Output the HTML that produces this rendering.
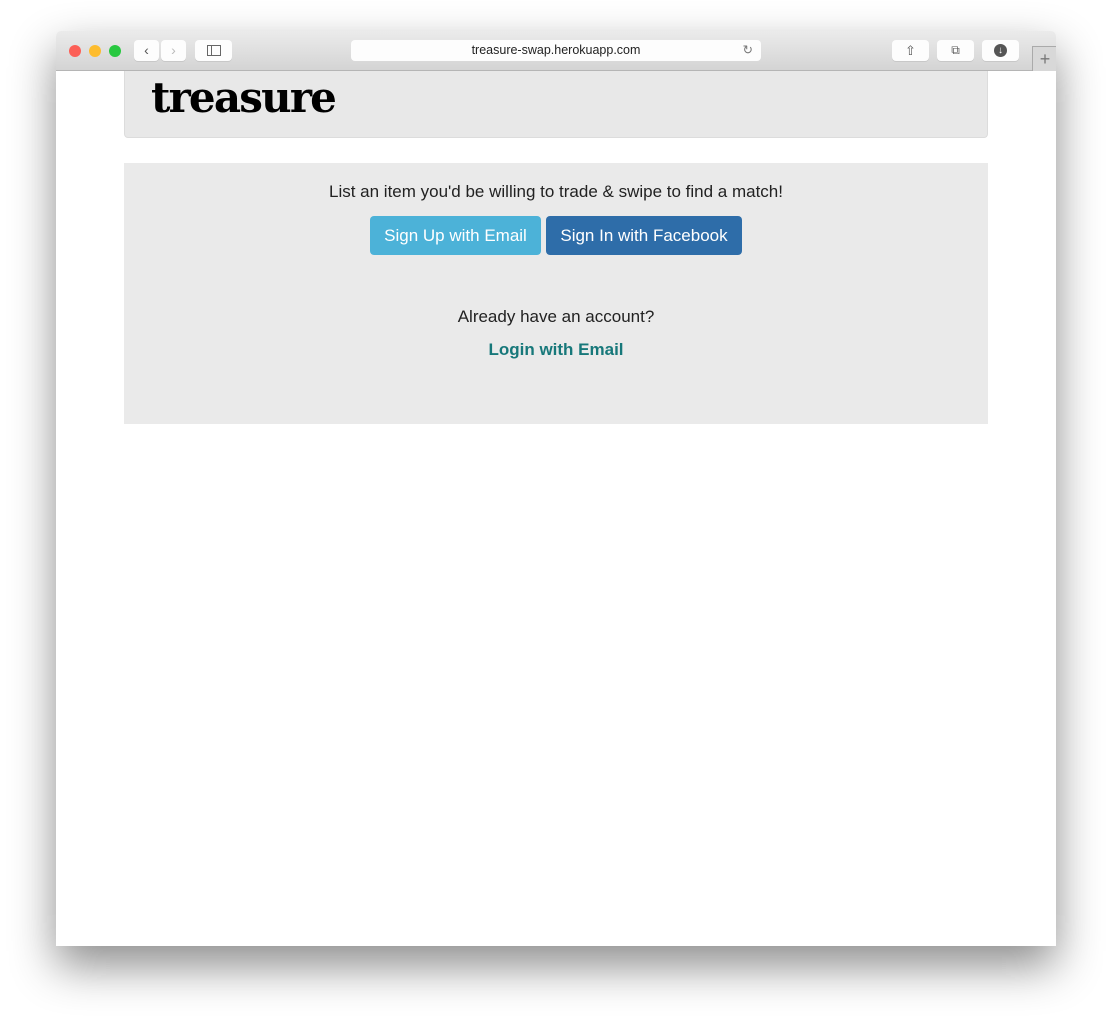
<!DOCTYPE html><html><head><style>
body{margin:0;width:1112px;height:1026px;background:#fff;position:relative;overflow:hidden;font-family:"Liberation Sans",sans-serif}
.win{position:absolute;left:56px;top:31px;width:1000px;height:915px;background:#fff;border-radius:5px 5px 0 0;box-shadow:0 20px 45px rgba(0,0,0,.45);overflow:hidden}
.tb{height:39px;background:linear-gradient(#ebebeb,#d4d4d4);border-bottom:1px solid #b5b5b5;position:relative}
.dot{position:absolute;top:14px;width:12px;height:12px;border-radius:50%}
.btn{position:absolute;top:9px;height:21px;background:#fdfdfd;border-radius:4px;box-shadow:0 1px 0 #c8c8c8}
.url{position:absolute;left:295px;top:9px;width:410px;height:21px;background:#fdfdfd;border-radius:4px;font-size:12.5px;text-align:center;line-height:21px;color:#222}
.hdr{position:absolute;left:68px;top:40px;width:862px;height:66px;background:#e8e8e8;border:1px solid #dcdcdc;border-top:0;border-radius:0 0 4px 4px}
.logo{position:absolute;left:26px;top:2px;font:bold 42px "DejaVu Serif",serif;letter-spacing:-1.8px;color:#000}
.jumbo{position:absolute;left:68px;top:132px;width:864px;height:261px;background:#eaeaea;text-align:center;color:#222}
.b{position:absolute;top:53px;height:39px;border-radius:4px;color:#fff;font-size:17px;line-height:39px;text-align:center}
</style></head><body>
<div class="win">
<div class="tb">
<div class="dot" style="left:13px;background:#fc5f57"></div>
<div class="dot" style="left:33px;background:#fdbc2e"></div>
<div class="dot" style="left:53px;background:#28c840"></div>
<div class="btn" style="left:78px;width:25px;font-size:14px;text-align:center;line-height:21px;color:#555">&#8249;</div>
<div class="btn" style="left:105px;width:25px;font-size:14px;text-align:center;line-height:21px;color:#bbb">&#8250;</div>
<div class="btn" style="left:139px;width:37px"><div style="position:absolute;left:12px;top:5px;width:12px;height:9px;border:1px solid #666"></div><div style="position:absolute;left:16px;top:5px;width:1px;height:11px;background:#666"></div></div>
<div class="url">treasure-swap.herokuapp.com<span style="position:absolute;right:8px;color:#777">&#8635;</span></div>
<div class="btn" style="left:836px;width:37px;text-align:center;font-size:13px;line-height:21px;color:#555">&#8679;</div>
<div class="btn" style="left:881px;width:37px;text-align:center;font-size:12px;line-height:21px;color:#555">&#10697;</div>
<div class="btn" style="left:926px;width:37px"><div style="position:absolute;left:12px;top:4px;width:13px;height:13px;border-radius:50%;background:#555;color:#fff;font-size:10px;text-align:center;line-height:13px">&#8595;</div></div>
<div style="position:absolute;left:976px;top:15px;width:24px;height:24px;border:1px solid #aaa;border-bottom:0;background:#d8d8d8;color:#777;text-align:center;font-size:18px;line-height:24px">+</div>
</div>
<div class="hdr"><div class="logo">treasure</div></div>
<div class="jumbo">
<div style="position:absolute;top:19px;width:100%;font-size:17px">List an item you'd be willing to trade &amp; swipe to find a match!</div>
<div class="b" style="left:246px;width:171px;background:#4cb2d8;border:0">Sign Up with Email</div>
<div class="b" style="left:422px;width:196px;background:#2e6da9">Sign In with Facebook</div>
<div style="position:absolute;top:144px;width:100%;font-size:17px">Already have an account?</div>
<div style="position:absolute;top:177px;width:100%;font-size:17px;font-weight:bold;color:#17787a">Login with Email</div>
</div>
</div>
</body></html>
